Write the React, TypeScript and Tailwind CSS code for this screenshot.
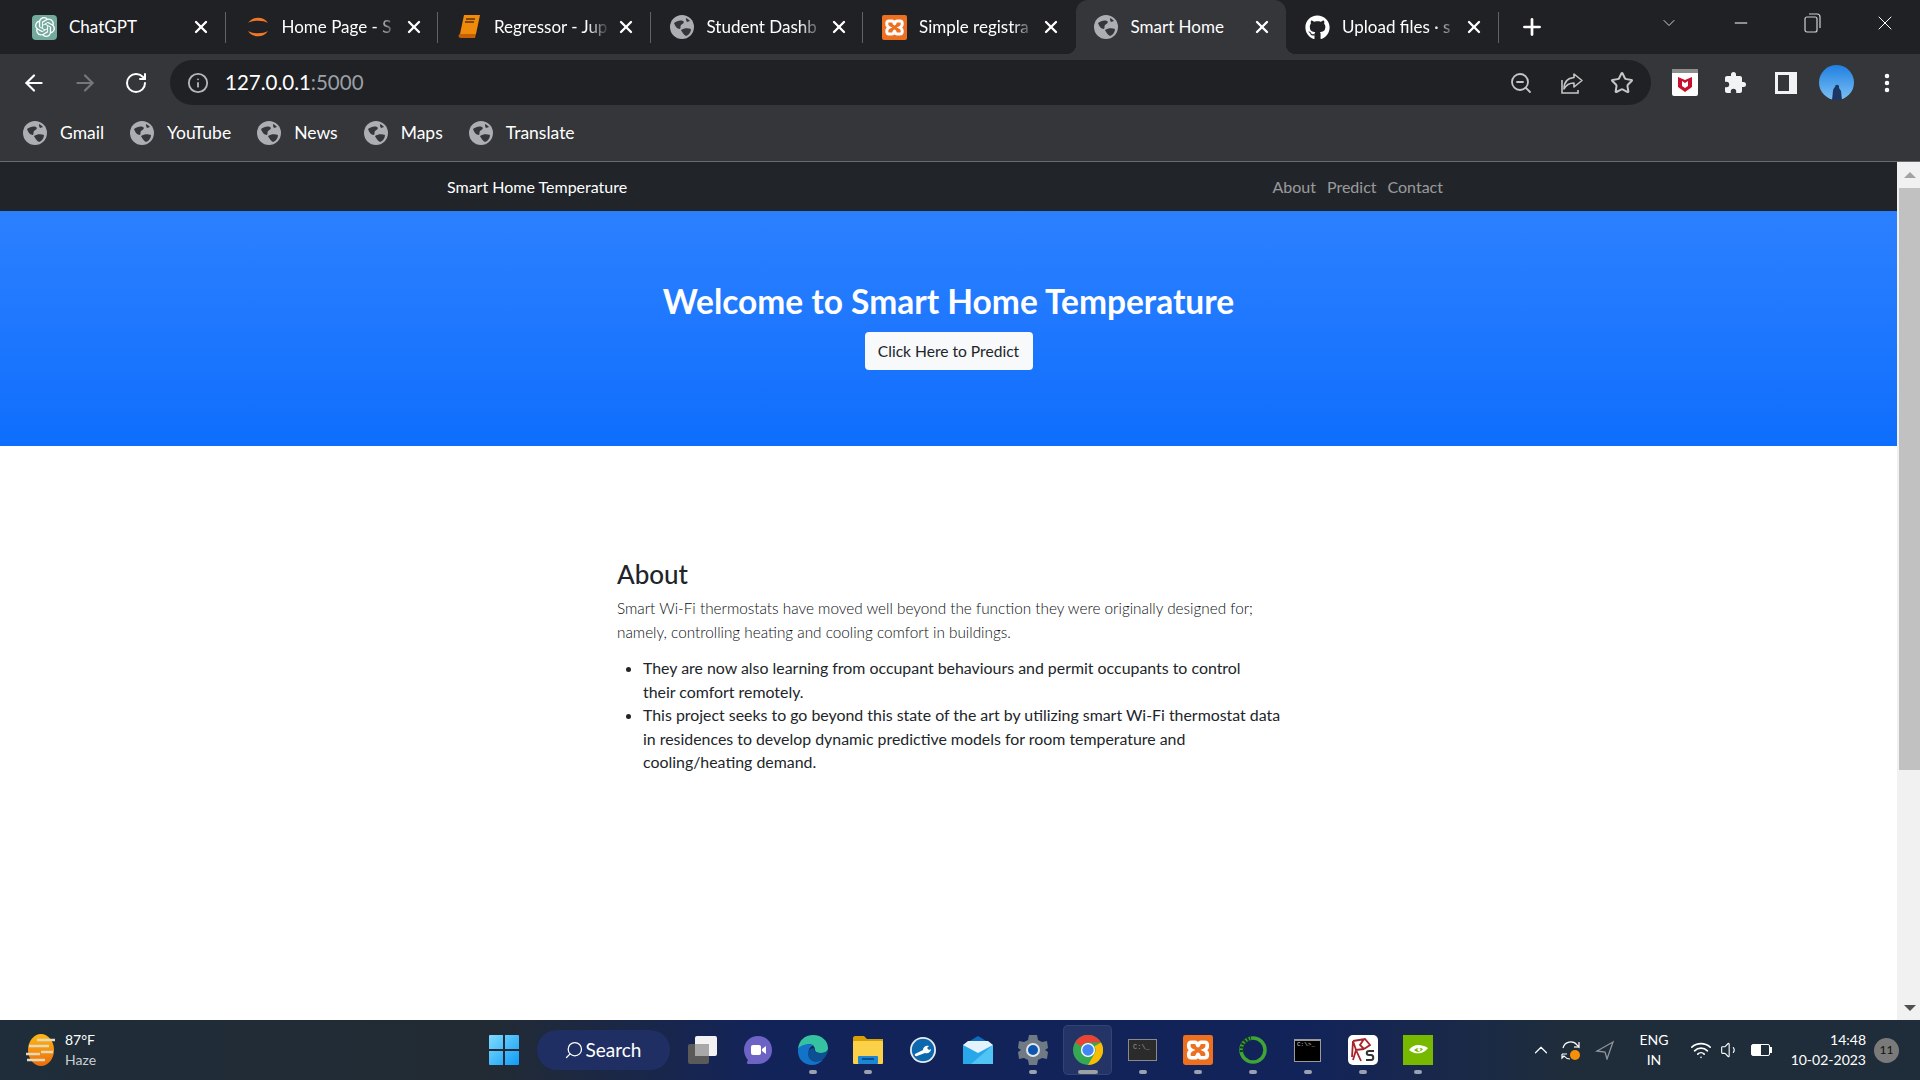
import React from "react";
import { FaGithub } from "react-icons/fa";
import { SiOpenai } from "react-icons/si";
import {
  ArrowLeft,
  ArrowRight,
  ChevronDown,
  ChevronUp,
  Info,
  Minus,
  MoreVertical,
  Plus,
  RotateCw,
  Search,
  Star,
  Volume1,
  Wifi,
  X,
  ZoomOut,
} from "lucide-react";

const Globe = ({ size = 24 }: { size?: number }) => (
  <svg width={size} height={size} viewBox="0 0 24 24" className="shrink-0">
    <circle cx="12" cy="12" r="12" fill="#abaeb3" />
    <path d="M4 8c3-2 6-3 9-2 2 1 0 3-2 4-1 1 0 3-1 4-3 0-5-3-6-6z" fill="#35363a" />
    <path d="M11 15c3-2 7-2 10-1 0 3-2 6-5 7-2-1-4-4-5-6z" fill="#35363a" />
    <path d="M16 3c2 1 3 2 4 3l-3 1c-1-1-1-3-1-4z" fill="#35363a" />
  </svg>
);

const Xampp = ({ size = 25 }: { size?: number }) => (
  <svg width={size} height={size} viewBox="0 0 25 25" className="shrink-0">
    <rect width="25" height="25" rx="2" fill="#ed7020" />
    <path
      d="M7 6h3c2 0 2 3 2.500 3s.5-3 2.500-3h3c3 0 3 5 0 6.500 3 1.500 3 6.500 0 6.500h-3c-2 0-2-3-2.500-3s-.5 3-2.500 3H7c-3 0-3-5 0-6.500-3-1.500-3-6.500 0-6.500z"
      fill="none"
      stroke="#fff"
      strokeWidth="3"
    />
  </svg>
);

const HomeFavicon = () => (
  <svg width="26" height="26" viewBox="0 0 26 26" className="shrink-0">
    <path d="M3 9C7 2 19 2 23 9 18 6 8 6 3 9z" fill="#f37726" />
    <path d="M3 17c4 7 16 7 20 0-5 3-15 3-20 0z" fill="#f37726" />
  </svg>
);

const BookFavicon = () => (
  <svg width="24" height="26" viewBox="0 0 24 26" className="shrink-0">
    <path d="M7 1h16l-4 19H3z" fill="#f08a0b" />
    <path d="M3 20h16l-1 4H4c-3 0-3-4-1-4z" fill="#c75f06" />
    <path d="M9 5h9M8 8h9" stroke="#5a3203" strokeWidth="1.500" />
  </svg>
);

const tabs = [
  {
    title: "ChatGPT",
    icon: (
      <span className="flex h-[25px] w-[25px] shrink-0 items-center justify-center rounded-[4px] bg-[#74aa9c] text-white">
        <SiOpenai size={20} />
      </span>
    ),
  },
  { title: "Home Page - S", icon: <HomeFavicon />, fade: true },
  { title: "Regressor - Jup", icon: <BookFavicon />, fade: true },
  { title: "Student Dashb", icon: <Globe />, fade: true },
  { title: "Simple registra", icon: <Xampp />, fade: true },
  { title: "Smart Home", icon: <Globe />, active: true },
  { title: "Upload files · s", icon: <FaGithub size={25} className="shrink-0 text-white" />, fade: true },
];

const bookmarks = ["Gmail", "YouTube", "News", "Maps", "Translate"];

const Tab = ({ tab, hideSep }: { tab: any; hideSep: boolean }) => (
  <div
    className={`relative flex h-[54px] shrink-0 items-center ${
      tab.active ? "w-[210.500px] rounded-t-[12px] bg-[#35363a] pl-[18px]" : "w-[212.500px] pl-[19px]"
    }`}
  >
    {tab.active && (
      <>
        <span className="absolute bottom-0 left-[-10px] h-[10px] w-[10px] bg-[radial-gradient(circle_at_0_0,transparent_10px,#35363a_10.500px)]" />
        <span className="absolute bottom-0 right-[-10px] h-[10px] w-[10px] bg-[radial-gradient(circle_at_100%_0,transparent_10px,#35363a_10.500px)]" />
      </>
    )}
    <span className="flex w-[37px] shrink-0">{tab.icon}</span>
    <span
      className={`w-[116px] overflow-hidden whitespace-nowrap text-[17px] text-white ${
        tab.fade ? "[mask-image:linear-gradient(to_right,#000_80%,transparent)]" : ""
      }`}
    >
      {tab.title}
    </span>
    <X size={20} strokeWidth={2.8} className={`${tab.active ? "ml-[5px]" : "ml-[6px]"} shrink-0 text-white`} />
    {!hideSep && <span className="absolute right-0 top-[12px] h-[31px] w-px bg-[#5f6368]" />}
  </div>
);

const McAfee = () => (
  <svg width="26" height="27" viewBox="0 0 26 27">
    <rect width="26" height="27" rx="2" fill="#fff" />
    <rect width="26" height="4" fill="#8d8d8d" />
    <path d="M6 8l7 3 7-3v10l-7 5-7-5z" fill="#c8102e" />
    <path d="M10 12l3 2 3-2v5l-3 2-3-2z" fill="#fff" />
  </svg>
);

const Puzzle = () => (
  <svg width="24" height="24" viewBox="0 0 24 24">
    <path
      fill="#f1f3f4"
      d="M20.500 11H19V7c0-1.100-.9-2-2-2h-4V3.500a2.500 2.500 0 0 0-5 0V5H4c-1.100 0-2 .9-2 2v3.800h1.500a2.700 2.700 0 0 1 0 5.400H2V20c0 1.100.9 2 2 2h3.800v-1.500a2.700 2.700 0 0 1 5.400 0V22H17c1.100 0 2-.9 2-2v-4h1.500a2.500 2.500 0 0 0 0-5z"
    />
  </svg>
);

const ShareArrow = () => (
  <svg width="24" height="24" viewBox="0 0 24 24" fill="none" stroke="#c4c7c5" strokeWidth="1.600" className="ml-[27px]">
    <path d="M14 3l8 6.500-8 6.500v-4c-5 0-8 2-10 6 0-7 4-11 10-11.500z" strokeLinejoin="round" />
    <path d="M2 9v13h16v-3" />
  </svg>
);

const Avatar = () => (
  <svg width="35" height="35" viewBox="0 0 35 35">
    <defs>
      <linearGradient id="sky" x1="0" y1="0" x2="0" y2="1">
        <stop offset="0" stopColor="#1f7fe0" />
        <stop offset="1" stopColor="#7cc0f5" />
      </linearGradient>
    </defs>
    <circle cx="17.500" cy="17.500" r="17.500" fill="url(#sky)" />
    <path d="M13 35l1-9c0-2 1-3 2-4 0-3 5-3 4 1l2 3 1 9z" fill="#1d3563" />
  </svg>
);

const TaskIcon = ({ children, dot }: { children: React.ReactNode; dot?: boolean }) => (
  <div className="relative flex h-[60px] w-[55px] items-center justify-center">
    {children}
    {dot && <span className="absolute bottom-[6px] h-[4px] w-[8px] rounded-full bg-[#98a2b3]" />}
  </div>
);

const TaskView = () => (
  <svg width="30" height="28" viewBox="0 0 30 28">
    <rect x="0" y="8" width="21" height="20" rx="2" fill="#5a5a5a" />
    <rect x="7" y="0" width="22" height="20" rx="2" fill="#f2f2f2" />
    <rect x="7" y="8" width="14" height="12" fill="#a8a8a8" />
  </svg>
);

const Teams = () => (
  <svg width="28" height="29" viewBox="0 0 28 29">
    <path d="M14 0c8 0 14 6 14 14s-6 14-14 14H4c-2 0-1-2 0-4-2-2-4-6-4-10C0 6 6 0 14 0z" fill="#6c63c4" />
    <rect x="7" y="9" width="10" height="10" rx="2" fill="#fff" />
    <path d="M18 13l4-3v8l-4-3z" fill="#fff" />
  </svg>
);

const Edge = () => (
  <svg width="30" height="30" viewBox="0 0 30 30">
    <path d="M0 14C1 5 7 0 15 0c9 0 15 6 15 13 0 4-3 5-7 5-4 0-6-1-6-3 0-5-5-7-9-5-4 1-7 3-8 4z" fill="#35c2a0" />
    <path d="M0 14c-1 9 5 16 14 16 4 0 8-2 11-5-6 2-12 0-14-5-1-4 0-8 5-10-6-2-14 0-16 4z" fill="#1273c9" />
    <path d="M10 19c0-3 2-6 6-6 0 3 2 5 7 5 3 0 5-1 7-3-1 7-6 12-13 12-4-1-7-4-7-8z" fill="#0c4f93" />
  </svg>
);

const Folder = () => (
  <svg width="30" height="28" viewBox="0 0 30 28">
    <path d="M0 2c0-1 1-2 2-2h9l3 3h16v6H0z" fill="#d9a005" />
    <rect x="0" y="5" width="30" height="23" rx="1" fill="#fcd14a" />
    <rect x="5" y="20" width="20" height="8" rx="1" fill="#1c86d6" />
    <rect x="9" y="22" width="12" height="2" fill="#0b4f8f" />
  </svg>
);

const Wrench = () => (
  <svg width="26" height="26" viewBox="0 0 26 26">
    <circle cx="13" cy="13" r="13" fill="#e8edf2" />
    <circle cx="13" cy="13" r="11.200" fill="#0d68ae" />
    <path d="M5 17l8-4c0-3 3-5 6-4l-2 2 2 2 2-1c0 3-3 5-6 4l-8 3c-1 1-3-1-2-2z" fill="#fff" />
  </svg>
);

const Mail = () => (
  <svg width="30" height="28" viewBox="0 0 30 28">
    <path d="M15 0l15 9H0z" fill="#0f6cbd" />
    <rect y="9" width="30" height="19" fill="#28a8ea" />
    <path d="M5 5h20l5 4-15 8L0 9z" fill="#e3f3fd" />
    <path d="M30 9v19H8z" fill="#50c4f5" />
  </svg>
);

const Gear = () => (
  <svg width="30" height="30" viewBox="0 0 30 30">
    <path
      d="M11 0h8l1 5 4 2 5-1 1 7-3 2 3 2-1 7-5-1-4 2-1 5h-8l-1-5-4-2-5 1-1-7 3-2-3-2 1-7 5 1 4-2z"
      fill="#6f7a85"
    />
    <circle cx="15" cy="15" r="7" fill="#dfe6ee" />
    <circle cx="15" cy="15" r="5" fill="#0f55ad" />
  </svg>
);

const Chrome = () => (
  <svg width="30" height="30" viewBox="0 0 36 36">
    <circle cx="18" cy="18" r="18" fill="#34a853" />
    <path d="M18 0a18 18 0 0 1 15.600 9H18a9 9 0 0 0-7.800 4.500L2.400 9A18 18 0 0 1 18 0z" fill="#ea4335" />
    <path d="M33.600 9A18 18 0 0 1 18 36l7.800-13.500A9 9 0 0 0 25.800 13.500z" fill="#fbbc04" />
    <circle cx="18" cy="18" r="8.500" fill="#fff" />
    <circle cx="18" cy="18" r="6.800" fill="#4285f4" />
  </svg>
);

const Cmd = () => (
  <div className="flex h-[22px] w-[29px] flex-col border border-[#8a8a8a] bg-[#2b2b2b] pl-[4px] pt-[3px]">
    <span className="font-['Liberation_Mono',monospace] text-[7px] leading-[8px] text-[#9a9a9a]">C:\_</span>
  </div>
);

const Terminal = () => (
  <div className="flex h-[23px] w-[27px] flex-col border border-t-[2px] border-[#9a9a9a] bg-black pl-[2px]">
    <span className="font-['Liberation_Mono',monospace] text-[6px] leading-[7px] text-[#d0d0d0]">C:\&gt;_</span>
  </div>
);

const GreenRing = () => (
  <svg width="28" height="28" viewBox="0 0 28 28">
    <circle cx="14" cy="14" r="12" fill="none" stroke="#3fa535" strokeWidth="3.500" />
    <path d="M3 16C2 9 6 3 12 2" fill="none" stroke="#14401f" strokeWidth="4" strokeDasharray="2 1.500" />
  </svg>
);

const KaliS = () => (
  <svg width="30" height="30" viewBox="0 0 30 30">
    <rect width="30" height="30" rx="5" fill="#fff" />
    <path d="M5 6l12-2 5 6-6 4M5 6l3 9 8-1M5 6l-1 16M8 15l-3 10M8 15l5 11M16 4l-4 6 4 4" fill="none" stroke="#a8242a" strokeWidth="1.800" />
    <path d="M26 16h-5c-3 0-3 4 0 4h2c3 0 3 5 0 5h-5" fill="none" stroke="#333" strokeWidth="2" />
  </svg>
);

const Nvidia = () => (
  <svg width="30" height="30" viewBox="0 0 30 30">
    <rect width="30" height="30" fill="#76b900" />
    <path d="M6 15c4-5 10-7 19-2-3 5-12 8-19 2z" fill="#fff" />
    <path d="M11 15c2-2 6-3 9-1-2 3-6 4-9 1z" fill="#76b900" />
    <circle cx="16" cy="14.500" r="1.500" fill="#fff" />
  </svg>
);

const WeatherIcon = () => (
  <svg width="32" height="34" viewBox="0 0 32 34">
    <defs>
      <linearGradient id="sun" x1="0" y1="0" x2="0" y2="1">
        <stop offset="0" stopColor="#fdb913" />
        <stop offset="1" stopColor="#ec6c0d" />
      </linearGradient>
    </defs>
    <ellipse cx="16" cy="17" rx="13" ry="16" fill="url(#sun)" />
    <path d="M12 7h18M4 13h20M16 19h12M1 21h14M2 27h18" stroke="#e6d9b8" strokeWidth="2.500" />
  </svg>
);

const WindowsLogo = () => (
  <svg width="30" height="30" viewBox="0 0 30 30">
    <defs>
      <linearGradient id="win" x1="0" y1="0" x2="1" y2="1">
        <stop offset="0" stopColor="#7fdcff" />
        <stop offset="1" stopColor="#0f9bf5" />
      </linearGradient>
    </defs>
    <path d="M0 1a1 1 0 0 1 1-1h13v14H0zM16 0h13a1 1 0 0 1 1 1v13H16zM0 16h14v14H1a1 1 0 0 1-1-1zM16 16h14v13a1 1 0 0 1-1 1H16z" fill="url(#win)" />
  </svg>
);

const SyncIcon = () => (
  <svg width="22" height="22" viewBox="0 0 22 22" fill="none" stroke="#fff" strokeWidth="1.200">
    <path d="M3 9a8 8 0 0 1 14-3l2 2V3" />
    <path d="M19 8h-5" />
    <path d="M2 15h5M2 15v4l2-2a8 8 0 0 0 6 3" />
    <circle cx="15" cy="16" r="5" fill="#f79009" stroke="none" />
  </svg>
);

const App = () => {
  return (
    <div className="flex h-screen w-full flex-col overflow-hidden bg-white font-['Lato','Noto_Sans',sans-serif]">
      {/* tab strip */}
      <div className="flex h-[54px] shrink-0 items-center bg-[#202124] pl-[13px]">
        {tabs.map((t, i) => (
          <Tab key={t.title} tab={t} hideSep={i === 4 || i === 5} />
        ))}
        <Plus size={26} strokeWidth={2.5} className="ml-[20px] text-white" />
        <ChevronDown size={20} strokeWidth={1.2} className="ml-[114px] mt-[-8px] text-[#d0d0d0]" />
        <Minus size={20} strokeWidth={1.2} className="ml-[52px] mt-[-8px] text-white" />
        <svg width="18" height="20" viewBox="0 0 18 20" fill="none" stroke="#d0d0d0" strokeWidth="1.200" className="ml-[53px] mt-[-8px]">
          <rect x="1" y="4" width="12" height="15" rx="2" />
          <path d="M5 1h8a3 3 0 0 1 3 3v11" />
        </svg>
        <X size={24} strokeWidth={1} className="ml-[51px] mt-[-8px] text-white" />
      </div>

      {/* toolbar */}
      <div className="flex h-[51px] shrink-0 items-end bg-[#35363a] pl-[21px]">
        <div className="flex h-[45px] items-center">
          <ArrowLeft size={26} strokeWidth={2} className="text-white" />
          <ArrowRight size={26} strokeWidth={2} className="ml-[25px] text-[#75777a]" />
          <RotateCw size={24} strokeWidth={2} className="ml-[26px] text-white" />
        </div>
        <div className="ml-[22px] flex h-[45px] w-[1481px] items-center rounded-full bg-[#202124] pl-[17px] pr-[17px]">
          <Info size={22} strokeWidth={2} className="text-[#b5b7ba]" />
          <span className="ml-[16px] mt-[-2px] text-[20.500px] leading-[28px] text-white">
            127.0.0.1<span className="text-[#9aa0a6]">:5000</span>
          </span>
          <ZoomOut size={24} strokeWidth={1.8} className="ml-auto text-[#c4c7c5]" />
          <ShareArrow />
          <Star size={24} strokeWidth={2} className="ml-[26px] text-[#c4c7c5]" />
        </div>
        <div className="flex h-[45px] items-center pl-[21px]">
          <McAfee />
          <span className="ml-[25px] flex"><Puzzle /></span>
          <span className="ml-[28px] flex h-[22px] w-[22px] justify-end border-[3px] border-r-[8px] border-[#f1f3f4] bg-[#35363a]" />
          <span className="ml-[22px] flex"><Avatar /></span>
          <MoreVertical size={24} strokeWidth={2.5} className="ml-[21px] text-white" />
        </div>
      </div>

      {/* bookmarks */}
      <div className="flex h-[57px] shrink-0 items-center border-b border-[#6b6c70] bg-[#35363a] pl-[23px]">
        {bookmarks.map((b) => (
          <div key={b} className="mr-[26px] flex items-center gap-[13px] text-[17.500px] text-white">
            <Globe />
            <span>{b}</span>
          </div>
        ))}
      </div>

      {/* page */}
      <div className="flex min-h-0 flex-1">
        <div className="min-w-0 flex-1">
          <nav className="flex h-[49px] items-center bg-[#212529] pl-[447px] pr-[454px] text-[16px]">
            <span className="text-white">Smart Home Temperature</span>
            <div className="ml-auto flex gap-[11px] text-[#ffffff8c]">
              <span>About</span>
              <span>Predict</span>
              <span>Contact</span>
            </div>
          </nav>
          <section className="flex h-[235px] flex-col items-center bg-gradient-to-b from-[#2b80ff] to-[#0d6efd] pt-[68px] text-center">
            <h1 className="text-[33.500px] font-bold leading-[44px] text-white">Welcome to Smart Home Temperature</h1>
            <button className="mt-[9px] h-[38px] w-[168px] rounded-[4px] bg-[#f8f9fa] pt-px text-[15.600px] text-[#212529]">
              Click Here to Predict
            </button>
          </section>
          <section className="ml-[617px] w-[690px] pt-[111px] text-[#212529]">
            <h2 className="text-[26px] font-medium leading-[34px]">About</h2>
            <p className="mt-[6px] text-[15.300px] font-light leading-[23.500px] text-[#0b0d10]">
              Smart Wi-Fi thermostats have moved well beyond the function they were originally designed for;
              <br />
              namely, controlling heating and cooling comfort in buildings.
            </p>
            <ul className="mt-[12px] list-disc pl-[26px] text-[15.900px] leading-[23.500px]">
              <li>
                They are now also learning from occupant behaviours and permit occupants to control
                <br />
                their comfort remotely.
              </li>
              <li>
                This project seeks to go beyond this state of the art by utilizing smart Wi-Fi thermostat data
                <br />
                in residences to develop dynamic predictive models for room temperature and
                <br />
                cooling/heating demand.
              </li>
            </ul>
          </section>
        </div>
        {/* scrollbar */}
        <div className="flex w-[23px] shrink-0 flex-col items-center bg-[#f1f1f1] pl-[2px]">
          <div className="flex h-[26px] items-center">
            <span className="h-0 w-0 border-x-[6px] border-b-[6px] border-x-transparent border-b-[#a3a3a3]" />
          </div>
          <div className="h-[582px] w-full bg-[#c1c1c1]" />
          <div className="mt-auto flex h-[24px] items-center">
            <span className="h-0 w-0 border-x-[6px] border-t-[6px] border-x-transparent border-t-[#505050]" />
          </div>
        </div>
      </div>

      {/* taskbar */}
      <div className="flex h-[60px] shrink-0 items-center bg-[linear-gradient(to_right,#1f2d3a_0%,#222b33_25%,#12235a_40%,#12235a_68%,#1f2d3a_82%,#1f2d3a_100%)] text-white">
        <div className="ml-[25px] flex w-[32px] justify-center"><WeatherIcon /></div>
        <div className="ml-[8px] flex w-[60px] flex-col text-[14px] leading-[20px]">
          <span>87°F</span>
          <span className="text-[#c9ced3]">Haze</span>
        </div>
        <div className="ml-[364px] flex"><WindowsLogo /></div>
        <div className="ml-[18px] flex h-[40px] w-[133px] items-center justify-center gap-[2px] rounded-full bg-[#1f2f63] pr-[2px] text-[19px]">
          <Search size={20} strokeWidth={1.5} className="-scale-x-100" />
          <span>Search</span>
        </div>
        <div className="ml-[5px] flex">
          <TaskIcon><TaskView /></TaskIcon>
          <TaskIcon><Teams /></TaskIcon>
          <TaskIcon dot><Edge /></TaskIcon>
          <TaskIcon dot><Folder /></TaskIcon>
          <TaskIcon><Wrench /></TaskIcon>
          <TaskIcon><Mail /></TaskIcon>
          <TaskIcon dot><Gear /></TaskIcon>
          <div className="relative flex h-[60px] w-[55px] items-center justify-center">
            <span className="absolute left-[3px] top-[5px] h-[50px] w-[49px] rounded-[5px] border border-[#ffffff14] bg-[#ffffff14]" />
            <span className="relative flex"><Chrome /></span>
            <span className="absolute bottom-[6px] h-[4px] w-[20px] rounded-full bg-[#9aa0a6]" />
          </div>
          <TaskIcon dot><Cmd /></TaskIcon>
          <TaskIcon dot><Xampp size={30} /></TaskIcon>
          <TaskIcon dot><GreenRing /></TaskIcon>
          <TaskIcon dot><Terminal /></TaskIcon>
          <TaskIcon dot><KaliS /></TaskIcon>
          <TaskIcon dot><Nvidia /></TaskIcon>
        </div>
        <ChevronUp size={22} strokeWidth={1.3} className="ml-[85px]" />
        <span className="ml-[8px] flex"><SyncIcon /></span>
        <svg width="20" height="20" viewBox="0 0 20 20" fill="none" stroke="#8f959b" strokeWidth="1.300" className="ml-[13px]">
          <path d="M18 2L2 11l8 1 2 7z" />
        </svg>
        <div className="ml-[22px] flex w-[34px] flex-col items-center text-[14px] leading-[20px]">
          <span>ENG</span>
          <span>IN</span>
        </div>
        <Wifi size={22} strokeWidth={1.8} className="ml-[19px]" />
        <Volume1 size={20} strokeWidth={1.3} className="ml-[8px]" />
        <span className="relative ml-[11px] h-[12px] w-[19px] rounded-[2px] border border-white after:absolute after:left-[18px] after:top-[2px] after:h-[6px] after:w-[2px] after:bg-white">
          <span className="block h-full w-[9px] bg-white" />
        </span>
        <div className="ml-[11px] flex w-[85px] flex-col items-end text-[14px] leading-[20px]">
          <span>14:48</span>
          <span>10-02-2023</span>
        </div>
        <span className="ml-[8px] flex h-[25px] w-[25px] items-center justify-center rounded-full bg-[#7a7a7a] text-[12px] text-[#111]">
          11
        </span>
      </div>
    </div>
  );
};

export default App;
